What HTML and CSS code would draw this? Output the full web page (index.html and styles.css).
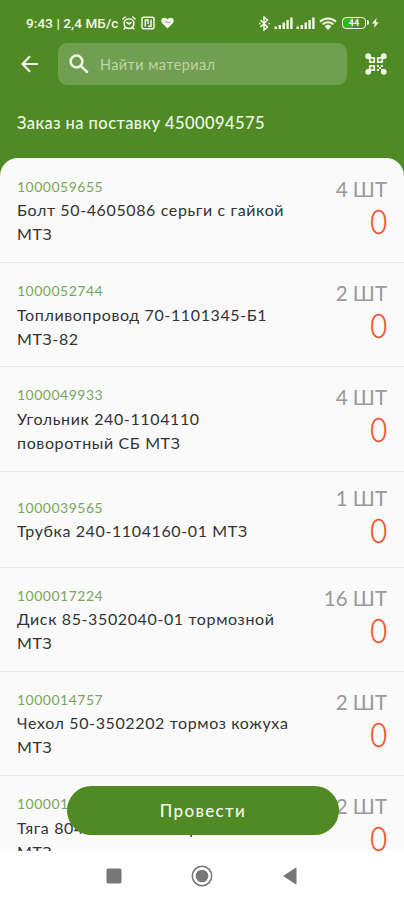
FILE: index.html
```html
<!DOCTYPE html>
<html lang="ru">
<head>
<meta charset="utf-8">
<title>Заказ на поставку</title>
<link rel="stylesheet" href="styles.css">
</head>
<body>
<div class="screen">
  <header class="header">
    <div class="status">
      <span class="clock">9:43 | 2,4 МБ/с</span>
      <svg class="alarm" width="14" height="14" viewBox="0 0 14 14" fill="none" stroke="currentColor" stroke-width="1.6" stroke-linecap="round"><circle cx="7" cy="7.6" r="4.9"/><path d="M.9 3 3.2 1M13.1 3 10.8 1M7 8 5 6.500M7 8l2-1.500M3.300 11.500 2.200 13M10.700 11.500l1.100 1.500"/></svg>
      <svg class="nfc" width="14" height="14" viewBox="0 0 14 14" fill="none" stroke="currentColor" stroke-width="1.5"><rect x="1" y="1.2" width="12" height="11.6" rx="1.5"/><path d="M4.300 10.500V4H7v4M7 10.300h3V3.500"/></svg>
      <svg class="heart" width="13" height="12" viewBox="0 0 13 12"><path fill="currentColor" d="M6.500 11.500 1.200 6.200C-1 3.500 1 .8 3.400.8c1.400 0 2.500.7 3.100 1.700C7.100 1.500 8.200.8 9.600.8 12 .8 14 3.500 11.800 6.200z"/><path d="M3.500 5.200h1.500l1-1 1.200 1.800 1-.8h1.300" fill="none" stroke="#4f8a25" stroke-width=".6"/></svg>
      <svg class="bt" width="11" height="15" viewBox="0 0 11 15" fill="none" stroke="currentColor" stroke-width="1.500"><path d="m1.500 4 7 7L5 14V1l3.500 3-7 7M0 7.500h1.500M9.500 7.500H11"/></svg>
      <svg class="signal" width="19" height="12" viewBox="0 0 19 12" fill="currentColor"><path d="M.5 9.500h2.400V12H.5zM4.600 8H7v4H4.600zM8.500 5.600h2.400V12H8.500zM12.400 3h2.400v9h-2.400zM16.200.5h2.400V12h-2.400z"/></svg>
      <svg class="signal second" width="19" height="12" viewBox="0 0 19 12" fill="currentColor"><path d="M.5 9.500h2.400V12H.5zM4.600 8H7v4H4.600zM8.500 5.600h2.400V12H8.500zM12.400 3h2.400v9h-2.400zM16.200.5h2.400V12h-2.400z"/></svg>
      <svg class="wifi" width="18" height="13" viewBox="0 0 18 13" fill="none" stroke="currentColor" stroke-width="2"><path d="M1 4.700c4.500-4.300 11.500-4.300 16 0M3.600 7.400c3-2.900 7.800-2.900 10.800 0"/><path d="M5.500 9.200c2-1.800 5-1.800 7 0L9 13z" fill="currentColor" stroke="none"/></svg>
      <span class="battery"><span class="level">44</span></span>
      <svg class="bolt" width="7" height="10" viewBox="0 0 7 10"><path fill="currentColor" d="M4.500 0 0 5.600h2.800L2 10l4.800-5.700H4z"/></svg>
    </div>
    <div class="toolbar">
      <svg class="back" width="18" height="18" viewBox="0 0 18 18" fill="none" stroke="currentColor" stroke-width="2.200"><path d="M17 9H2.200M9 1.300 1.600 9 9 16.700"/></svg>
      <div class="search">
        <svg width="20" height="20" viewBox="0 0 20 20" fill="none" stroke="currentColor" stroke-width="2.500"><circle cx="7.500" cy="7.500" r="5.900"/><path d="m11.800 11.800 6.900 6.900"/></svg>
        <span>Найти материал</span>
      </div>
      <svg class="qr" width="22" height="22" viewBox="0 0 22 22" fill="currentColor"><circle cx="3.200" cy="3.200" r="2.900"/><circle cx="18.800" cy="3.200" r="2.900"/><circle cx="3.200" cy="18.800" r="2.900"/><circle cx="18.800" cy="18.800" r="2.900"/><g fill="#4f8a25" stroke="currentColor" stroke-width="1.800" stroke-linejoin="round"><path d="M4.800 4.800h4.400v4.400H4.800zM12.800 4.800h4.400v4.400h-4.400zM4.800 12.800h4.400v4.400H4.800z"/></g><path fill="#4f8a25" d="M12 12h6v6h-6z"/><path d="M12 12h2v2h-2zM14 14h2v2h-2zM16 12h2v2h-2zM12 16h2v2h-2zM16 16h2v2h-2z"/></svg>
    </div>
    <h1>Заказ на поставку 4500094575</h1>
  </header>
  <main class="list">
    <article class="row"><div class="info"><div class="code">1000059655</div><div class="name">Болт 50-4605086 серьги с гайкой<br>МТЗ</div></div><div class="amount"><div class="qty">4 ШТ</div><div class="count">0</div></div></article>
    <article class="row"><div class="info"><div class="code">1000052744</div><div class="name">Топливопровод 70-1101345-Б1<br>МТЗ-82</div></div><div class="amount"><div class="qty">2 ШТ</div><div class="count">0</div></div></article>
    <article class="row"><div class="info"><div class="code">1000049933</div><div class="name">Угольник 240-1104110<br>поворотный СБ МТЗ</div></div><div class="amount"><div class="qty">4 ШТ</div><div class="count">0</div></div></article>
    <article class="row"><div class="info"><div class="code">1000039565</div><div class="name">Трубка 240-1104160-01 МТЗ</div></div><div class="amount"><div class="qty">1 ШТ</div><div class="count">0</div></div></article>
    <article class="row"><div class="info"><div class="code">1000017224</div><div class="name">Диск 85-3502040-01 тормозной<br>МТЗ</div></div><div class="amount"><div class="qty">16 ШТ</div><div class="count">0</div></div></article>
    <article class="row"><div class="info"><div class="code">1000014757</div><div class="name">Чехол 50-3502202 тормоз кожуха<br>МТЗ</div></div><div class="amount"><div class="qty">2 ШТ</div><div class="count">0</div></div></article>
    <article class="row"><div class="info"><div class="code">1000014321</div><div class="name">Тяга 804605300 в сборе<br>МТЗ</div></div><div class="amount"><div class="qty">2 ШТ</div><div class="count">0</div></div></article>
  </main>
  <button class="submit">Провести</button>
  <nav class="nav">
    <svg width="16" height="16" viewBox="0 0 16 16"><rect x=".5" y=".5" width="15" height="15" rx="2" fill="#777"/></svg>
    <svg width="22" height="22" viewBox="0 0 22 22"><circle cx="11" cy="11" r="9.700" fill="none" stroke="#777" stroke-width="1.500"/><circle cx="11" cy="11" r="6.300" fill="#777"/></svg>
    <svg width="14" height="18" viewBox="0 0 14 18"><path d="M0 9 13.500.3v17.400z" fill="#777"/></svg>
  </nav>
</div>
</body>
</html>
```
FILE: styles.css
```css
* { box-sizing: border-box; }
body { margin: 0; background: #4f8a25; font-family: Lato, "Noto Sans", sans-serif; }
svg { display: block; flex: none; }
.screen { position: relative; width: 404px; height: 900px; display: flex; flex-direction: column; overflow: hidden; }
.header { height: 158px; flex: none; color: #f1f8ea; }
.status { height: 43px; padding: 3px 25px 0 26px; display: flex; align-items: center; }
.clock { width: 94px; font: 500 13.5px/16px Roboto, sans-serif; letter-spacing: .1px; white-space: nowrap; }
.alarm { margin-left: 2px; }
.nfc { margin-left: 5px; }
.heart { margin-left: 6px; }
.bt { margin-left: auto; }
.signal { margin-left: 4px; }
.second { margin-left: 3px; }
.wifi { margin-left: 4px; }
.battery { position: relative; width: 24px; height: 12px; margin-left: 5px; border: 1.5px solid currentColor; border-radius: 4px; background: linear-gradient(90deg, #39b51e 44%, transparent 44%); }
.battery::after { content: ""; position: absolute; right: -4px; top: 2px; width: 2px; height: 5px; background: currentColor; border-radius: 0 2px 2px 0; }
.level { display: block; font: 700 9px/10px Roboto, sans-serif; text-align: center; }
.bolt { margin-left: 6px; }
.toolbar { height: 42px; display: flex; align-items: center; padding: 0 17px 0 21px; }
.search { width: 289px; height: 42px; margin-left: 19px; padding-left: 11px; display: flex; align-items: center; gap: 11px; border-radius: 9px; background: #709f50; }
.search span { font-size: 14.5px; letter-spacing: .4px; color: #bdd4ac; }
.qr { margin-left: auto; }
h1 { margin: 26px 0 0 17px; font-size: 16.5px; line-height: 24px; font-weight: 500; letter-spacing: .42px; white-space: nowrap; }
.list { flex: 1; min-height: 0; overflow: hidden; background: #fafafa; border-radius: 18px 18px 0 0; padding-top: 1px; }
.row { display: flex; justify-content: space-between; align-items: center; padding: 16px 17px 15.200px; border-bottom: 1px solid #ebebeb; }
.info { white-space: nowrap; color: #333; }
.code { font-size: 14px; line-height: 24px; color: #79a65b; letter-spacing: .5px; }
.name { position: relative; top: -.6px; font-size: 16px; line-height: 24px; letter-spacing: .62px; }
.amount { height: 64px; text-align: right; }
.qty { font-size: 20.5px; line-height: 20px; color: #999; letter-spacing: 0; }
.count { width: 19px; margin-left: auto; font-size: 33px; line-height: 44px; font-weight: 300; color: #f14a20; -webkit-text-stroke: .3px #f14a20; transform: scaleX(.88); transform-origin: right; }
.submit { position: absolute; left: 67px; top: 786px; width: 272px; height: 49px; border: 0; border-radius: 25px; background: #4f8a25; color: #f1f8ea; font: 500 17px/49px Lato, "Noto Sans", sans-serif; letter-spacing: 1.35px; padding: 0; }
.nav { height: 49px; flex: none; background: #fefefe; display: flex; align-items: center; padding-left: 106px; }
.nav svg + svg { margin-left: 69px; }
.nav svg:last-child { margin-left: 70px; }
```
